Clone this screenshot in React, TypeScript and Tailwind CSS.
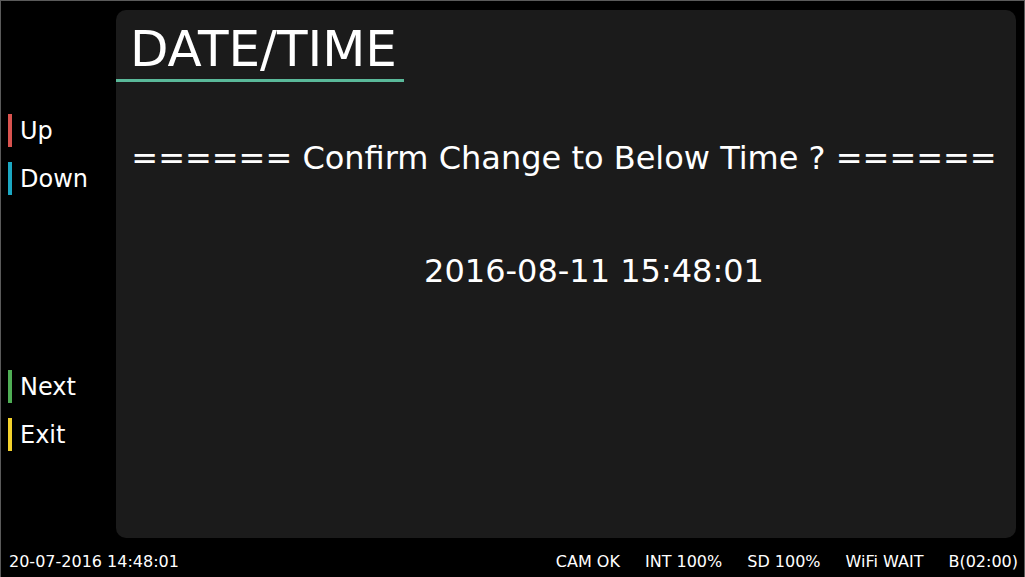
import React from 'react'

// ── Data ──────────────────────────────────────────────────────────────────

const KEYS_TOP = [
  { label: 'Up', bar: 'bg-[#d9534f]' },
  { label: 'Down', bar: 'bg-[#1ba7c2]' },
]

const KEYS_BOTTOM = [
  { label: 'Next', bar: 'bg-[#4fae55]' },
  { label: 'Exit', bar: 'bg-[#f4d22c]' },
]

const STATUS = ['CAM OK', 'INT 100%', 'SD 100%', 'WiFi WAIT', 'B(02:00)']

// ── Main ──────────────────────────────────────────────────────────────────

export default function App() {
  return (
    <div
      className="w-[1025px] h-[577px] bg-black text-white border-t border-l border-r border-[#5a5a5a] flex flex-col overflow-hidden"
      style={{ fontFamily: '"DejaVu Sans", Verdana, sans-serif' }}
    >
      <div className="flex h-[537px] pt-[9px] pr-[8px]">
        {/* ── Soft keys ─────────────────────────────────────────────── */}
        <div className="w-[115px] shrink-0 pl-[7px] pt-[104px] flex flex-col">
          <div className="flex flex-col gap-[15px]">
            {KEYS_TOP.map((k) => (
              <KeyRow key={k.label} label={k.label} bar={k.bar} />
            ))}
          </div>
          <div className="mt-[175px] flex flex-col gap-[15px]">
            {KEYS_BOTTOM.map((k) => (
              <KeyRow key={k.label} label={k.label} bar={k.bar} />
            ))}
          </div>
        </div>

        {/* ── Panel ─────────────────────────────────────────────────── */}
        <div className="flex-1 rounded-[10px] bg-[#1b1b1b]">
          <div className="w-[288px] pl-[14px] pt-[14px] pb-[5px] border-b-[3px] border-[#5ab99a]">
            <h1 className="text-[50px] leading-[50px]">DATE/TIME</h1>
          </div>
          <p className="mt-[60px] pr-[4px] text-center text-[32px] leading-[32px]">
            ====== Confirm Change to Below Time ? ======
          </p>
          <p className="mt-[81px] pl-[56px] text-center text-[32px] leading-[32px]">
            2016-08-11 15:48:01
          </p>
        </div>
      </div>

      {/* ── Status bar ──────────────────────────────────────────────── */}
      <div className="flex pt-[16px] pl-[8px] pr-[6px] text-[16px] leading-[16px]">
        <span>20-07-2016 14:48:01</span>
        <div className="ml-auto flex gap-[25px]">
          {STATUS.map((s) => (
            <span key={s}>{s}</span>
          ))}
        </div>
      </div>
    </div>
  )
}

function KeyRow({ label, bar }: { label: string; bar: string }) {
  return (
    <div className="flex items-center h-[33px]">
      <div className={`w-[4px] h-[33px] ${bar}`} />
      <span className="ml-[8px] text-[24px] leading-[24px]">{label}</span>
    </div>
  )
}
